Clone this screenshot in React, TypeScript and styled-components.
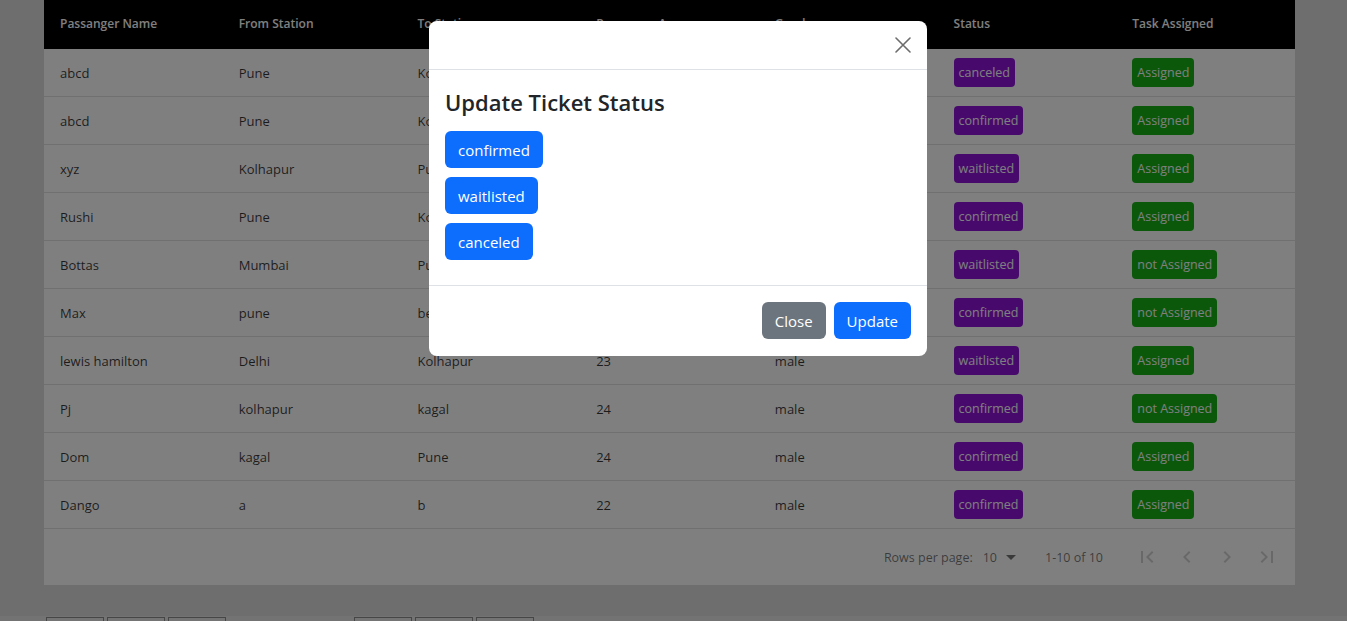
import React from "react";
import styled, { createGlobalStyle } from "styled-components";

const GlobalStyle = createGlobalStyle`
  html, body {
    margin: 0;
    padding: 0;
    overflow: hidden;
  }
  body {
    background: #dcdcdc;
    font-family: "Open Sans", "Noto Sans", sans-serif;
  }
  * {
    box-sizing: border-box;
  }
`;

const Page = styled.div`
  width: 1347px;
  height: 621px;
  display: flex;
  flex-direction: column;
  background: #dcdcdc;
`;

const TableWrap = styled.div`
  margin: 0 52px 0 44px;
  background: #ffffff;
`;

const Row = styled.div<{ $head?: boolean }>`
  display: grid;
  grid-template-columns: repeat(7, 1fr);
  height: ${(p) => (p.$head ? "49px" : "48px")};
  align-items: center;
  background: ${(p) => (p.$head ? "#000000" : "#ffffff")};
  color: ${(p) => (p.$head ? "#ffffff" : "rgba(0,0,0,0.78)")};
  font-size: ${(p) => (p.$head ? "12px" : "13px")};
  font-weight: ${(p) => (p.$head ? 600 : 400)};
  border-bottom: ${(p) => (p.$head ? "none" : "1px solid #e0e0e0")};
  padding-bottom: ${(p) => (p.$head ? "3px" : "0")};
`;

const Cell = styled.div`
  padding: 0 16px;
  white-space: nowrap;
  overflow: hidden;
`;

const Badge = styled.span<{ $kind: "status" | "task" }>`
  display: inline-block;
  padding: 5px 5px;
  border-radius: 4px;
  color: #ffffff;
  font-size: 12.5px;
  line-height: 19px;
  background: ${(p) => (p.$kind === "status" ? "#8f14d8" : "#16b016")};
`;

const Footer = styled.div`
  height: 56px;
  display: flex;
  align-items: center;
  justify-content: flex-end;
  padding-right: 8px;
  font-size: 12.5px;
  color: rgba(0, 0, 0, 0.54);
`;

const RowsLabel = styled.span`
  margin-right: 10px;
`;

const RowsSelect = styled.span`
  display: flex;
  align-items: center;
  gap: 2px;
  margin-right: 22px;
`;

const Range = styled.span`
  margin-right: 24px;
`;

const PageBtn = styled.span`
  width: 40px;
  height: 40px;
  display: flex;
  align-items: center;
  justify-content: center;
  svg {
    fill: rgba(0, 0, 0, 0.18);
  }
`;

const BottomBar = styled.div`
  margin-top: auto;
  height: 5px;
  display: flex;
  gap: 3px;
  padding-left: 46px;
  background: #e6e6e6;
`;

const BarButton = styled.span<{ $gap?: number }>`
  width: 58px;
  height: 4px;
  margin-top: 1px;
  margin-left: ${(p) => p.$gap ?? 0}px;
  border: 1px solid #8c8c8c;
  border-bottom: none;
  background: #e8e8e8;
`;

const Backdrop = styled.div`
  position: fixed;
  inset: 0;
  background: rgba(0, 0, 0, 0.5);
`;

const Modal = styled.div`
  margin: 21px 0 0 429px;
  width: 498px;
  background: #ffffff;
  border-radius: 8px;
  font-family: "Open Sans", "Noto Sans", sans-serif;
  color: #212529;
`;

const ModalHeader = styled.div`
  height: 49px;
  display: flex;
  align-items: center;
  justify-content: flex-end;
  padding: 0 16px;
  border-bottom: 1px solid #dee2e6;
`;

const CloseX = styled.span`
  width: 16px;
  height: 16px;
  display: flex;
  svg {
    stroke: #6c6c6c;
  }
`;

const ModalBody = styled.div`
  padding: 18px 16px 25px;
  display: flex;
  flex-direction: column;
  align-items: flex-start;
  gap: 9px;
  border-bottom: 1px solid #dee2e6;
`;

const Title = styled.h4`
  margin: 0 0 6px;
  font-size: 22px;
  font-weight: 600;
  line-height: 28px;
`;

const Btn = styled.button<{ $variant?: "primary" | "secondary" }>`
  border: none;
  border-radius: 6px;
  padding: 0 13px;
  height: 37px;
  font-family: inherit;
  font-size: 15px;
  color: #ffffff;
  background: ${(p) => (p.$variant === "secondary" ? "#6c757d" : "#0d6efd")};
`;

const ModalFooter = styled.div`
  display: flex;
  justify-content: flex-end;
  gap: 8px;
  padding: 16px 16px 17px;
`;

type Ticket = {
  name: string;
  from: string;
  to: string;
  age: number;
  gender: string;
  status: string;
  task: string;
};

const tickets: Ticket[] = [
  { name: "abcd", from: "Pune", to: "Kolhapur", age: 21, gender: "male", status: "canceled", task: "Assigned" },
  { name: "abcd", from: "Pune", to: "Kolhapur", age: 21, gender: "male", status: "confirmed", task: "Assigned" },
  { name: "xyz", from: "Kolhapur", to: "Pune", age: 22, gender: "male", status: "waitlisted", task: "Assigned" },
  { name: "Rushi", from: "Pune", to: "Kolhapur", age: 22, gender: "male", status: "confirmed", task: "Assigned" },
  { name: "Bottas", from: "Mumbai", to: "Pune", age: 33, gender: "male", status: "waitlisted", task: "not Assigned" },
  { name: "Max", from: "pune", to: "belgaum", age: 25, gender: "male", status: "confirmed", task: "not Assigned" },
  { name: "lewis hamilton", from: "Delhi", to: "Kolhapur", age: 23, gender: "male", status: "waitlisted", task: "Assigned" },
  { name: "Pj", from: "kolhapur", to: "kagal", age: 24, gender: "male", status: "confirmed", task: "not Assigned" },
  { name: "Dom", from: "kagal", to: "Pune", age: 24, gender: "male", status: "confirmed", task: "Assigned" },
  { name: "Dango", from: "a", to: "b", age: 22, gender: "male", status: "confirmed", task: "Assigned" },
];

const Icon = ({ d }: { d: string }) => (
  <svg width="24" height="24" viewBox="0 0 24 24">
    <path d={d} />
  </svg>
);

export default function App() {
  return (
    <>
      <GlobalStyle />
      <Page>
        <TableWrap>
          <Row $head>
            <Cell>Passanger Name</Cell>
            <Cell>From Station</Cell>
            <Cell>To Station</Cell>
            <Cell>Passanger Age</Cell>
            <Cell>Gender</Cell>
            <Cell>Status</Cell>
            <Cell>Task Assigned</Cell>
          </Row>
          {tickets.map((t, i) => (
            <Row key={i}>
              <Cell>{t.name}</Cell>
              <Cell>{t.from}</Cell>
              <Cell>{t.to}</Cell>
              <Cell>{t.age}</Cell>
              <Cell>{t.gender}</Cell>
              <Cell>
                <Badge $kind="status">{t.status}</Badge>
              </Cell>
              <Cell>
                <Badge $kind="task">{t.task}</Badge>
              </Cell>
            </Row>
          ))}
          <Footer>
            <RowsLabel>Rows per page:</RowsLabel>
            <RowsSelect>
              10
              <svg width="24" height="24" viewBox="0 0 24 24" fill="rgba(0,0,0,0.54)">
                <path d="M7 10l5 5 5-5z" />
              </svg>
            </RowsSelect>
            <Range>1-10 of 10</Range>
            <PageBtn>
              <Icon d="M18.41 16.59L13.82 12l4.59-4.59L17 6l-6 6 6 6zM6 6h2v12H6z" />
            </PageBtn>
            <PageBtn>
              <Icon d="M15.41 7.41L14 6l-6 6 6 6 1.41-1.41L10.83 12z" />
            </PageBtn>
            <PageBtn>
              <Icon d="M10 6L8.59 7.41 13.17 12l-4.58 4.59L10 18l6-6z" />
            </PageBtn>
            <PageBtn>
              <Icon d="M5.59 7.41L10.18 12l-4.59 4.59L7 18l6-6-6-6zM16 6h2v12h-2z" />
            </PageBtn>
          </Footer>
        </TableWrap>
        <BottomBar>
          <BarButton />
          <BarButton />
          <BarButton />
          <BarButton $gap={125} />
          <BarButton />
          <BarButton />
        </BottomBar>
      </Page>
      <Backdrop>
        <Modal>
          <ModalHeader>
            <CloseX>
              <svg width="16" height="16" viewBox="0 0 16 16" strokeWidth="1.6" strokeLinecap="round">
                <path d="M1 1L15 15M15 1L1 15" />
              </svg>
            </CloseX>
          </ModalHeader>
          <ModalBody>
            <Title>Update Ticket Status</Title>
            <Btn>confirmed</Btn>
            <Btn>waitlisted</Btn>
            <Btn>canceled</Btn>
          </ModalBody>
          <ModalFooter>
            <Btn $variant="secondary">Close</Btn>
            <Btn>Update</Btn>
          </ModalFooter>
        </Modal>
      </Backdrop>
    </>
  );
}
